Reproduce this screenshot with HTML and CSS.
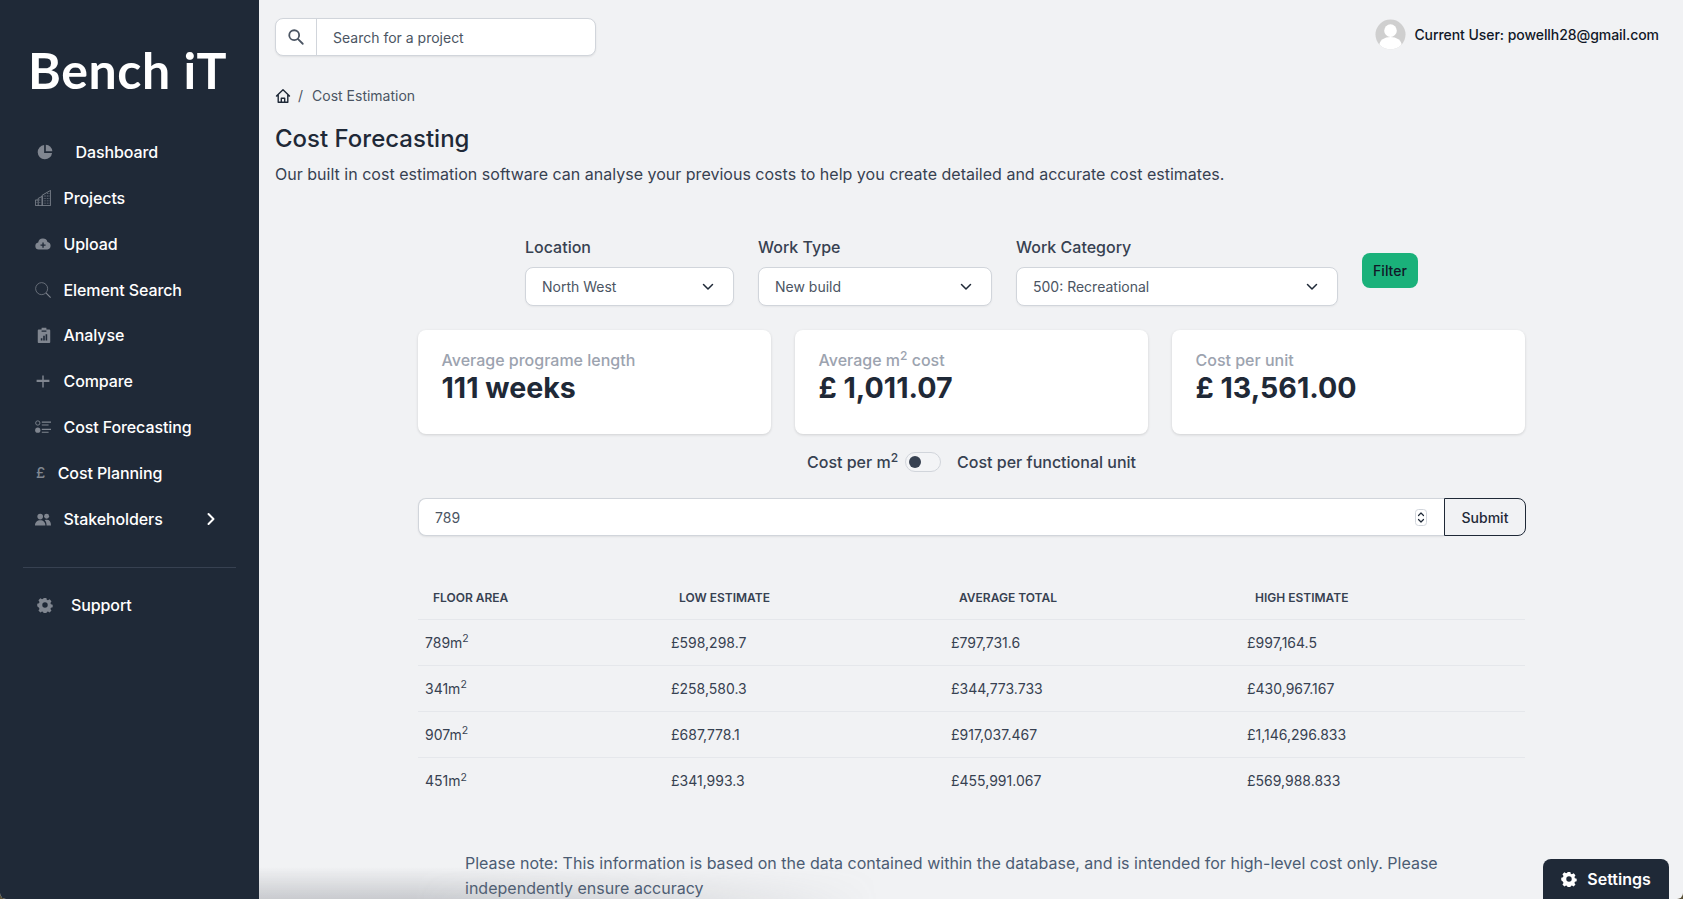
FILE: index.html
```html
<!DOCTYPE html>
<html lang="en">
<head>
<meta charset="utf-8">
<title>Cost Forecasting</title>
<link rel="stylesheet" href="styles.css">
</head>
<body>
<div class="app">
  <aside class="sidebar">
    <div class="logo">Bench iT</div>
    <nav class="nav">
      <a class="nav-item gap-dash"><svg class="ico" viewBox="0 0 20 20"><path d="M8.900 1.200A9 9 0 1 0 18.800 11.100H8.900z"/><path d="M11 .8V9h8.200A8.600 8.600 0 0 0 11 .8z"/></svg><span>Dashboard</span></a>
      <a class="nav-item"><svg class="ico" viewBox="0 0 20 20"><g fill="none" stroke="currentColor" stroke-width="1.100"><path d="M4 19.500V10.500L9 8V19.500M9 19.500V6.500L19.500 .5V19.500H.5V12.500H4"/></g><path d="M11 7h1v1h-1zM13 7h1v1h-1zM15 7h1v1h-1zM17 7h1v1h-1zM11 10h1v1h-1zM13 10h1v1h-1zM15 10h1v1h-1zM17 10h1v1h-1zM11 13h1v1h-1zM13 13h1v1h-1zM15 13h1v1h-1zM17 13h1v1h-1zM11 16h1v1h-1zM13 16h1v1h-1zM15 16h1v1h-1zM17 16h1v1h-1zM15 4h1v1h-1zM17 4h1v1h-1zM5.500 12h1v1h-1zM5.500 15h1v1h-1zM2 15h1v1H2z"/></svg><span>Projects</span></a>
      <a class="nav-item"><svg class="ico" viewBox="0 0 20 20"><path fill-rule="evenodd" d="M4.700 17A4.500 4.500 0 0 1 4 8.100 6 6 0 0 1 15.600 7.400 4.900 4.900 0 0 1 15.500 17zM9.200 8.200v2.400H6.900v1.700h2.300v2.400h1.700v-2.400h2.300v-1.700h-2.300V8.200z"/></svg><span>Upload</span></a>
      <a class="nav-item"><svg class="ico" viewBox="0 0 20 20"><circle cx="8.300" cy="8.300" r="7.500" fill="none" stroke="currentColor" stroke-width=".9"/><path d="M13.700 13.700l5.800 5.800" fill="none" stroke="currentColor" stroke-width="1.400"/></svg><span>Element Search</span></a>
      <a class="nav-item ana"><svg class="ico" viewBox="0 0 20 20"><path fill-rule="evenodd" d="M3.600 3H7V1h6v2h3.400c.8 0 1.400.6 1.400 1.400v14.200c0 .8-.6 1.400-1.400 1.400H3.600c-.8 0-1.400-.6-1.400-1.400V4.400C2.200 3.600 2.800 3 3.600 3zM7 4.500V6h6V4.500zM6 14v3h2v-3zM9 11v6h2v-6zM12 9v8h2V9z"/></svg><span>Analyse</span></a>
      <a class="nav-item"><svg class="ico" viewBox="0 0 20 20"><path d="M2 8.300h7.100V3h1.800v5.300H18v3h-7.100V18H9.100v-6.700H2z"/></svg><span>Compare</span></a>
      <a class="nav-item"><svg class="ico" viewBox="0 0 20 20"><circle cx="3.500" cy="5" r="2.700" fill="none" stroke="currentColor" stroke-width="1.100"/><circle cx="3.500" cy="14" r="3.300"/><path d="M8.500 3.200H20v1.400H8.500zM8.500 6.800H17v1.400H8.500zM8.500 12.200H20v1.400H8.500zM8.500 15.800H17v1.400H8.500z"/></svg><span>Cost Forecasting</span></a>
      <a class="nav-item gap-pound"><span class="pound">£</span><span>Cost Planning</span></a>
      <a class="nav-item"><svg class="ico" viewBox="0 0 20 20"><circle cx="6.500" cy="7" r="3.500"/><circle cx="14.500" cy="6.500" r="3.100"/><path d="M0 18c0-4 2.600-6.500 6.500-6.500S13 14 13 18zM14.500 18c0-2.700-.7-5-2.300-6.500.7-.4 1.500-.6 2.400-.6 3.600 0 5.400 2.500 5.400 7.100z"/></svg><span class="nav-label">Stakeholders</span><svg class="chev" viewBox="0 0 10 14"><path d="M2.500 2l5 5-5 5" fill="none" stroke="currentColor" stroke-width="2" stroke-linecap="round" stroke-linejoin="round"/></svg></a>
    </nav>
    <hr class="divider">
    <a class="nav-item gap-support"><svg class="ico" viewBox="0 0 20 20"><path fill-rule="evenodd" d="M8.300 1.500h3.400l.5 2.300 1.500.7 2.100-1.200 2.300 2.500-1.300 2 .6 1.600 2.200.6v3.200l-2.200.6-.6 1.600 1.300 2-2.300 2.400-2.100-1.200-1.500.7-.5 2.300H8.300l-.5-2.300-1.500-.7-2.100 1.200-2.400-2.400 1.300-2-.6-1.600L.3 12V8.800l2.200-.6.6-1.600-1.300-2 2.400-2.500 2.100 1.200 1.500-.7zM10 7a3.400 3.400 0 1 0 0 6.800A3.400 3.400 0 0 0 10 7z" transform="translate(0 -.4)"/></svg><span>Support</span></a>
  </aside>

  <main class="main">
    <header class="topbar">
      <div class="search">
        <span class="search-ico"><svg viewBox="0 0 20 20" class="search-svg"><circle cx="8" cy="8" r="5.500" fill="none" stroke="currentColor" stroke-width="2"/><path d="M12.300 12.300l5.200 5.200" stroke="currentColor" stroke-width="2" stroke-linecap="round"/></svg></span>
        <span class="search-text">Search for a project</span>
      </div>
      <div class="user">
        <svg class="avatar" viewBox="0 0 32 32"><defs><clipPath id="av"><circle cx="16" cy="16" r="15.500"/></clipPath></defs><circle cx="16" cy="16" r="15.500" fill="#cfcfcf"/><g clip-path="url(#av)" fill="#fff"><circle cx="16" cy="12" r="6.500"/><ellipse cx="16" cy="27" rx="11.500" ry="8.500"/></g></svg>
        <span>Current User: powellh28@gmail.com</span>
      </div>
    </header>

    <div class="crumbs">
      <svg class="home" viewBox="0 0 16 16"><path d="M1.500 8L8 1.800 14.500 8M3.200 6.800V14.300H12.800V6.800M6.300 14.300V10.300H9.700V14.300" fill="none" stroke="currentColor" stroke-width="1.400" stroke-linejoin="round" stroke-linecap="round"/></svg>
      <span class="sep">/</span>
      <span>Cost Estimation</span>
    </div>
    <h1 class="title">Cost Forecasting</h1>
    <p class="lead">Our built in cost estimation software can analyse your previous costs to help you create detailed and accurate cost estimates.</p>

    <section class="content">
      <div class="filters">
        <div class="field w-loc">
          <label class="field-label">Location</label>
          <div class="select"><span>North West</span><svg class="caret" viewBox="0 0 12 8"><path d="M1.500 1.500L6 6l4.500-4.500" fill="none" stroke="currentColor" stroke-width="1.500" stroke-linecap="round" stroke-linejoin="round"/></svg></div>
        </div>
        <div class="field w-type">
          <label class="field-label">Work Type</label>
          <div class="select"><span>New build</span><svg class="caret" viewBox="0 0 12 8"><path d="M1.500 1.500L6 6l4.500-4.500" fill="none" stroke="currentColor" stroke-width="1.500" stroke-linecap="round" stroke-linejoin="round"/></svg></div>
        </div>
        <div class="field w-cat">
          <label class="field-label">Work Category</label>
          <div class="select"><span>500: Recreational</span><svg class="caret" viewBox="0 0 12 8"><path d="M1.500 1.500L6 6l4.500-4.500" fill="none" stroke="currentColor" stroke-width="1.500" stroke-linecap="round" stroke-linejoin="round"/></svg></div>
        </div>
        <button class="filter-btn">Filter</button>
      </div>

      <div class="cards">
        <div class="card"><div class="card-label">Average programe length</div><div class="card-value">111 weeks</div></div>
        <div class="card"><div class="card-label">Average m<sup>2</sup> cost</div><div class="card-value">£ 1,011.07</div></div>
        <div class="card"><div class="card-label">Cost per unit</div><div class="card-value">£ 13,561.00</div></div>
      </div>

      <div class="toggle-row">
        <span>Cost per m<sup>2</sup></span>
        <span class="toggle"><span class="knob"></span></span>
        <span>Cost per functional unit</span>
      </div>

      <div class="entry">
        <div class="entry-input"><span>789</span>
          <svg class="spin" viewBox="0 0 12 17"><rect x=".5" y=".5" width="11" height="16" rx="3" fill="#fff" stroke="#d1d5db"/><path d="M3.500 6.500L6 4 8.500 6.500M3.500 10.500L6 13 8.500 10.500" fill="none" stroke="#1f2937" stroke-width="1.200" stroke-linecap="round" stroke-linejoin="round"/></svg>
        </div>
        <button class="submit">Submit</button>
      </div>

      <table class="table">
        <colgroup><col class="c1"><col class="c2"><col class="c3"><col class="c4"></colgroup>
        <thead><tr><th>Floor Area</th><th>Low Estimate</th><th>Average Total</th><th>High Estimate</th></tr></thead>
        <tbody>
          <tr><td>789m<sup>2</sup></td><td>£598,298.7</td><td>£797,731.6</td><td>£997,164.5</td></tr>
          <tr><td>341m<sup>2</sup></td><td>£258,580.3</td><td>£344,773.733</td><td>£430,967.167</td></tr>
          <tr><td>907m<sup>2</sup></td><td>£687,778.1</td><td>£917,037.467</td><td>£1,146,296.833</td></tr>
          <tr><td>451m<sup>2</sup></td><td>£341,993.3</td><td>£455,991.067</td><td>£569,988.833</td></tr>
        </tbody>
      </table>

      <p class="note">Please note: This information is based on the data contained within the database, and is intended for high-level cost only. Please independently ensure accuracy</p>
    </section>
  </main>

  <div class="bottom-fade"></div>
  <button class="settings"><svg class="settings-ico" viewBox="0 0 20 20"><path fill-rule="evenodd" d="M8.300 1.500h3.400l.5 2.300 1.500.7 2.100-1.200 2.300 2.500-1.300 2 .6 1.600 2.200.6v3.200l-2.200.6-.6 1.600 1.300 2-2.300 2.400-2.100-1.200-1.500.7-.5 2.300H8.300l-.5-2.300-1.500-.7-2.100 1.200-2.400-2.400 1.300-2-.6-1.600L.3 12V8.800l2.200-.6.6-1.600-1.300-2 2.400-2.500 2.100 1.200 1.500-.7zM10 7a3.400 3.400 0 1 0 0 6.800A3.400 3.400 0 0 0 10 7z" transform="translate(0 -.4)"/></svg><span>Settings</span></button>
</div>
</body>
</html>
```
FILE: styles.css
```css
* { box-sizing: border-box; }
html, body { margin: 0; height: 100%; overflow: hidden; }
body { font-family: Inter, "Liberation Sans", sans-serif; background: #5a5036; color: #1f2937; }
sup { font-size: 75%; line-height: 0; vertical-align: baseline; position: relative; top: -0.5em; }

.app { position: relative; display: flex; height: 899px; overflow: hidden; background: #f1f2f4; border-radius: 0 0 6px 6px; }

.sidebar { width: 259px; flex: none; background: #1f2937; padding: 39px 23px 0; }
.logo { font-family: Lato, sans-serif; font-weight: 700; font-size: 50px; line-height: 62px; color: #fff; white-space: nowrap; letter-spacing: .6px; margin-left: 5px; }
.nav { margin-top: 28.300px; }
.nav-item { display: flex; align-items: center; height: 45.800px; padding-left: 12px; color: #fff; font-size: 16px; font-weight: 500; letter-spacing: -.1px; }
.nav-label { flex: 1; }
.ico { width: 16px; height: 16px; flex: none; fill: #808690; color: #808690; margin-right: 12.500px; }
.gap-dash .ico { margin: 0 22.600px 0 2px; }
.gap-support .ico { margin: 0 18px 0 2px; }
.ana .ico { margin-left: 1px; margin-right: 11.500px; }
.gap-pound .pound { width: 22.700px; color: #808690; font-size: 15px; flex: none; padding-left: 1px; }
.chev { width: 10px; height: 14px; margin-right: 20px; color: #fff; }
.divider { border: 0; border-top: 1px solid #374151; margin: 26px 0 14px; }

.main { flex: 1; min-width: 0; padding: 18px 24px 0 16px; }
.topbar { display: flex; justify-content: space-between; align-items: flex-start; height: 38px; }
.search { display: flex; width: 321px; height: 38px; background: #fff; border: 1px solid #d1d5db; border-radius: 8px; box-shadow: 0 1px 2px rgba(0,0,0,.08); font-size: 14px; color: #4b5563; align-items: stretch; }
.search-ico { width: 41px; display: flex; align-items: center; justify-content: center; border-right: 1px solid #d1d5db; color: #4b5563; }
.search-svg { width: 18px; height: 18px; }
.search-text { align-self: center; padding-left: 16px; }
.user { display: flex; align-items: center; gap: 8px; font-size: 14px; font-weight: 500; letter-spacing: -.06px; color: #111827; margin-top: 1px; }
.avatar { width: 31px; height: 31px; }

.crumbs { display: flex; align-items: center; margin-top: 29px; height: 20px; font-size: 14px; color: #4b5563; }
.home { width: 16px; height: 16px; color: #1f2937; margin-top: 2px; }
.sep { margin: 0 9px 0 7px; }
.title { margin: 18px 0 0; font-size: 24px; line-height: 32px; font-weight: 500; color: #1f2937; }
.lead { margin: 7px 0 0; font-size: 16px; line-height: 24px; letter-spacing: .012px; color: #374151; }

.content { width: 1107px; margin: 49px 0 0 143px; }
.filters { display: flex; justify-content: center; gap: 24px; align-items: flex-start; }
.field-label { display: block; font-size: 16px; line-height: 24px; font-weight: 500; color: #374151; }
.w-loc { width: 209px; }
.w-type { width: 234px; }
.w-cat { width: 322px; }
.select { display: flex; justify-content: space-between; align-items: center; margin-top: 8px; height: 39px; padding: 0 19px 0 16px; background: #fff; border: 1px solid #d1d5db; border-radius: 8px; box-shadow: 0 1px 2px rgba(0,0,0,.05); font-size: 14px; color: #4b5563; }
.caret { width: 12px; height: 8px; color: #1f2937; }
.filter-btn { margin-top: 18px; width: 56px; height: 35px; padding: 0; border: 0; border-radius: 8px; background: #1ab17a; color: #111827; font: 500 14px Inter, sans-serif; }

.cards { display: grid; grid-template-columns: repeat(3, 1fr); gap: 24px; margin-top: 24px; }
.card { height: 104px; padding: 18px 23.500px; background: #fff; border-radius: 8px; box-shadow: 0 1px 3px rgba(0,0,0,.14); }
.card-label { font-size: 16px; line-height: 24px; font-weight: 500; color: #9ca3af; }
.card-value { font-size: 28.600px; line-height: 32px; font-weight: 700; color: #1f2937; }

.toggle-row { display: flex; justify-content: center; align-items: center; height: 24px; margin-top: 16px; font-size: 16px; font-weight: 500; color: #374151; }
.toggle { width: 36px; height: 20px; margin: 0 16px 0 7px; padding: 3px; background: #f3f4f6; border: 1px solid #d1d5db; border-radius: 10px; }
.knob { display: block; width: 12px; height: 12px; margin-top: 0; background: #374151; border-radius: 50%; }

.entry { display: flex; width: 1108px; height: 38px; margin-top: 24px; font-size: 14px; }
.entry-input { flex: 1; display: flex; justify-content: space-between; align-items: center; padding: 0 17px 0 16px; background: #fff; border: 1px solid #d1d5db; border-right: 0; border-radius: 8px 0 0 8px; box-shadow: 0 1px 2px rgba(0,0,0,.08); color: #4b5563; }
.spin { width: 12px; height: 17px; }
.submit { width: 82px; padding: 0; background: #f1f2f4; border: 1px solid #1f2937; border-radius: 0 8px 8px 0; font: 500 14px Inter, sans-serif; color: #1f2937; }

.table { width: 100%; margin-top: 40px; border-collapse: collapse; table-layout: fixed; color: #374151; }
.c1 { width: 246px; }
.c2 { width: 280px; }
.c3 { width: 296px; }
.table th { height: 43px; padding: 0 15px; text-align: left; font-size: 12px; font-weight: 600; text-transform: uppercase; color: #374151; border-bottom: 1px solid #e5e7eb; }
.table td { height: 46px; padding: 0 7px; font-size: 14px; border-bottom: 1px solid #e5e7eb; }
.table tbody tr:last-child td { border-bottom: 0; }

.note { width: 990px; margin: 48px 0 0 47px; font-size: 16px; line-height: 25px; letter-spacing: .015px; color: #4b5c73; }

.bottom-fade { position: absolute; left: 259px; bottom: 0; width: 620px; height: 32px; background: linear-gradient(to bottom, rgba(110,114,122,0), rgba(110,114,122,.3)); -webkit-mask-image: linear-gradient(to right, #000 25%, transparent); mask-image: linear-gradient(to right, #000 25%, transparent); pointer-events: none; }
.settings { position: absolute; right: 14px; bottom: 0; display: flex; align-items: center; justify-content: center; gap: 10px; width: 126px; height: 40px; padding: 0 0 1px; border: 0; border-radius: 8px 8px 0 0; background: #1f2937; color: #fff; font: 600 16px Inter, sans-serif; }
.settings-ico { width: 16px; height: 16px; fill: #fff; }
```
